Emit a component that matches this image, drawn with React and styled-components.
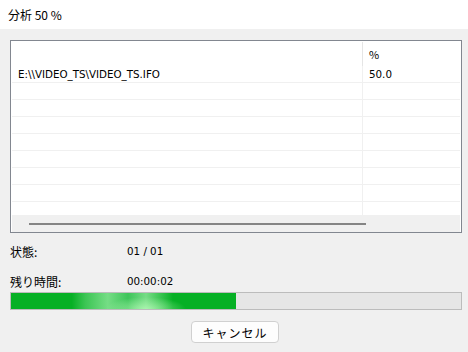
import React from "react";
import styled, { createGlobalStyle } from "styled-components";

const GlobalStyle = createGlobalStyle`
  html, body {
    margin: 0;
    padding: 0;
    background: #f0f0f0;
  }
  body {
    font-family: "Noto Sans CJK JP", "Noto Sans", sans-serif;
    font-size: 12px;
    color: #000;
  }
`;

const Window = styled.div`
  width: 468px;
  height: 352px;
  display: flex;
  flex-direction: column;
  overflow: hidden;
`;

const TitleBar = styled.div`
  height: 29px;
  background: #fff;
  display: flex;
  align-items: center;
  padding-left: 8px;
  font-size: 12px;
`;

const Body = styled.div`
  display: flex;
  flex-direction: column;
  padding: 11px 6px 0 10px;
`;

const ListBox = styled.div`
  height: 190px;
  border: 1px solid #828790;
  background: #fff;
  display: flex;
  flex-direction: column;
  padding: 1px 1px 0 1px;
`;

const Grid = styled.div`
  flex: 1;
  display: grid;
  grid-template-columns: 350px 98px;
  grid-auto-rows: 17px;
  grid-template-rows: 24px;
  overflow: hidden;
`;

const HeadCell = styled.div`
  display: flex;
  align-items: center;
  padding-left: 6px;
  border-left: ${(p) => (p.sep ? "1px solid #e5e5e5" : "none")};
  font-size: 11px;
`;

const Cell = styled.div`
  display: flex;
  align-items: center;
  padding-left: 6px;
  border-bottom: 1px solid #f0f0f0;
  border-left: ${(p) => (p.sep ? "1px solid #f0f0f0" : "none")};
  font-family: "DejaVu Sans", sans-serif;
  font-size: 10.3px;
  color: #000;
  box-sizing: border-box;
`;

const ScrollBar = styled.div`
  height: 17px;
  background: #f0f0f0;
  display: flex;
  align-items: center;
  padding-left: 17px;
`;

const Thumb = styled.div`
  width: 337px;
  height: 2px;
  background: #858585;
`;

const Info = styled.div`
  padding-top: 3px;
`;

const InfoRow = styled.div`
  display: grid;
  grid-template-columns: 117px 1fr;
  align-items: center;
  height: 30px;
`;

const Label = styled.div`
  font-size: 12px;
`;

const Value = styled.div`
  font-family: "DejaVu Sans", sans-serif;
  font-size: 10.3px;
`;

const Progress = styled.div`
  height: 16px;
  border: 1px solid #bcbcbc;
  background: #e6e6e6;
  display: flex;
  margin-top: -4px;
`;

const Fill = styled.div`
  height: 100%;
  background:
    radial-gradient(ellipse 40px 12px at 135px 100%, rgba(190, 255, 190, 0.7), rgba(190, 255, 190, 0) 100%),
    linear-gradient(90deg, #06b025 0%, #06b025 27%, #3cc554 33%, #75dd85 43%, #3ec55a 52%, #76dc86 60%, #06b025 72%, #06b025 100%);
`;

const ButtonRow = styled.div`
  display: flex;
  justify-content: center;
  padding-top: 11px;
  padding-right: 2px;
`;

const Button = styled.button`
  width: 88px;
  height: 22px;
  background: #fdfdfd;
  border: 1px solid #d0d0d0;
  border-radius: 4px;
  font-family: "Noto Sans CJK JP", sans-serif;
  font-size: 12px;
  letter-spacing: 1px;
  color: #000;
  padding: 0;
`;

const rows = [["E:\\\\VIDEO_TS\\VIDEO_TS.IFO", "50.0"]];
for (let i = 0; i < 8; i++) rows.push(["", ""]);

export default function App() {
  const percent = 50;
  return (
    <Window>
      <GlobalStyle />
      <TitleBar>分析 {percent} %</TitleBar>
      <Body>
        <ListBox>
          <Grid>
            <HeadCell />
            <HeadCell sep>%</HeadCell>
            {rows.map((r, i) => (
              <React.Fragment key={i}>
                <Cell>{r[0]}</Cell>
                <Cell sep>{r[1]}</Cell>
              </React.Fragment>
            ))}
          </Grid>
          <ScrollBar>
            <Thumb />
          </ScrollBar>
        </ListBox>
        <Info>
          <InfoRow>
            <Label>状態:</Label>
            <Value>01 / 01</Value>
          </InfoRow>
          <InfoRow>
            <Label>残り時間:</Label>
            <Value>00:00:02</Value>
          </InfoRow>
        </Info>
        <Progress>
          <Fill style={{ width: `${percent}%` }} />
        </Progress>
        <ButtonRow>
          <Button>キャンセル</Button>
        </ButtonRow>
      </Body>
    </Window>
  );
}
